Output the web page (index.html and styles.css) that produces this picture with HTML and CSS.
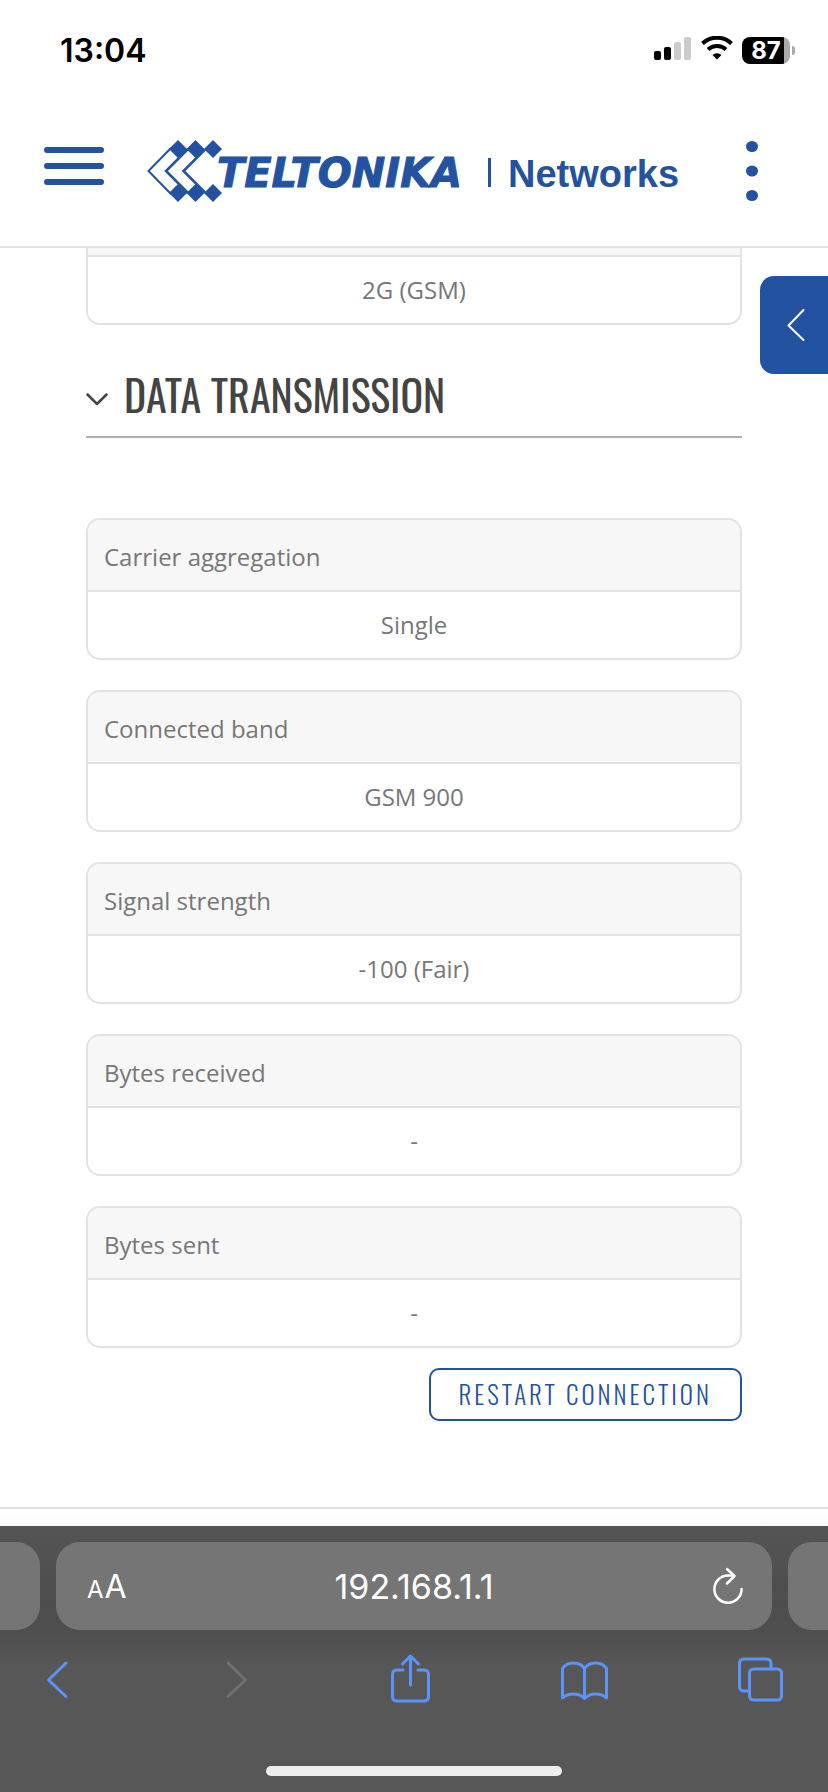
FILE: index.html
```html
<!DOCTYPE html>
<html lang="en">
<head>
    <meta charset="UTF-8">
    <meta name="viewport" content="width=device-width, initial-scale=1.0">
    <title>Teltonika Networks</title>
    <link rel="stylesheet" href="styles.css">
</head>
<body>
    <div class="status-bar">
        <span class="time">13:04</span>
        <div class="status-icons">
            <svg width="38" height="28" viewBox="0 0 38 28">
                <rect x="0" y="15" width="7" height="9" rx="2" fill="#000"/>
                <rect x="10" y="11" width="7" height="13" rx="2" fill="#000"/>
                <rect x="20" y="6" width="7" height="18" rx="2" fill="#ccc"/>
                <rect x="30" y="1" width="7" height="23" rx="2" fill="#ccc"/>
            </svg>
            <svg width="32" height="28" viewBox="0 0 32 28" fill="none" stroke="#000" stroke-width="4">
                <path d="M1.500 7.500a21 21 0 0 1 29 0"/>
                <path d="M7 13.500a13.200 13.200 0 0 1 18 0"/>
                <path d="M16 23.500l-4.500-4.500a6.500 6.500 0 0 1 9 0z" fill="#000" stroke="none"/>
            </svg>
            <div class="battery"><span>87</span></div>
        </div>
    </div>

    <header class="header">
        <button class="icon-button" aria-label="Menu">
            <svg width="60" height="60" viewBox="0 0 60 60" fill="#2352a0">
                <rect y="6" width="60" height="6" rx="3"/>
                <rect y="22" width="60" height="6" rx="3"/>
                <rect y="38" width="60" height="6" rx="3"/>
            </svg>
        </button>
        <a href="#" class="logo" aria-label="Teltonika Networks">
            <svg width="564" height="64" viewBox="0 0 564 64" fill="#2352a0">
                <g fill="none" stroke="#2352a0" stroke-width="2">
                    <path d="M28 9L5.500 32L28 55"/>
                    <path d="M45 10L23 32L45 54" stroke-width="2.500"/>
                    <path d="M62 10.500L40.500 32L62 53.500" stroke-width="2.500"/>
                </g>
                <path d="M35 1l9 9-9 9-9-9z"/>
                <path d="M52.500 1l9 9-9 9-9-9z"/>
                <path d="M70 1l9 9-9 9-9-9z"/>
                <path d="M35 45l9 9-9 9-9-9z"/>
                <path d="M52.500 45l9 9-9 9-9-9z"/>
                <path d="M70 45l9 9-9 9-9-9z"/>
                <text class="logo-name" x="74" y="48">TELTONIKA</text>
                <rect x="345" y="19" width="3" height="29"/>
                <text class="logo-unit" x="365" y="48">Networks</text>
            </svg>
        </a>
        <button class="icon-button" aria-label="More options">
            <svg width="12" height="60" viewBox="0 0 12 60" fill="#2352a0">
                <ellipse cx="6" cy="5.500" rx="6" ry="5.500"/>
                <ellipse cx="6" cy="30" rx="6" ry="5.500"/>
                <ellipse cx="6" cy="54.500" rx="6" ry="5.500"/>
            </svg>
        </button>
    </header>

    <main class="content">
        <button class="side-tab" aria-label="Open side panel">
            <svg width="18" height="32" viewBox="0 0 18 32" fill="none" stroke="#fff" stroke-width="2" stroke-linecap="round" stroke-linejoin="round">
                <path d="M16.500 1L1.500 16.500L16.500 31"/>
            </svg>
        </button>

        <!-- Card scrolled under the header -->
        <div class="card card-scrolled">
            <div class="card-label"></div>
            <div class="card-value">2G (GSM)</div>
        </div>

        <h2 class="section-title">
            <svg width="22" height="14" viewBox="0 0 22 14" fill="none" stroke="#444" stroke-width="2.500" stroke-linecap="round" stroke-linejoin="round">
                <path d="M1.500 1.500L11 11L20.500 1.500"/>
            </svg>
            <span>DATA TRANSMISSION</span>
        </h2>

        <div class="cards">
            <div class="card">
                <div class="card-label">Carrier aggregation</div>
                <div class="card-value">Single</div>
            </div>
            <div class="card">
                <div class="card-label">Connected band</div>
                <div class="card-value">GSM 900</div>
            </div>
            <div class="card">
                <div class="card-label">Signal strength</div>
                <div class="card-value">-100 (Fair)</div>
            </div>
            <div class="card">
                <div class="card-label">Bytes received</div>
                <div class="card-value">-</div>
            </div>
            <div class="card">
                <div class="card-label">Bytes sent</div>
                <div class="card-value">-</div>
            </div>
        </div>

        <div class="actions">
            <button class="button">RESTART CONNECTION</button>
        </div>
        <div class="footer"></div>
    </main>

    <div class="browser">
        <div class="tabs">
            <div class="tab-edge tab-left"></div>
            <div class="address">
                <button class="text-size" aria-label="Page settings"><span class="small-a">A</span><span class="big-a">A</span></button>
                <input class="url" type="text" value="192.168.1.1" aria-label="Address">
                <button class="icon-button reload" aria-label="Reload">
                    <svg width="32" height="38" viewBox="0 0 32 38" fill="none" stroke="#fff" stroke-width="2.500" stroke-linecap="round" stroke-linejoin="round">
                        <path d="M22 8.500H16A13.600 13.600 0 1 0 29.600 22"/>
                        <path d="M15 2l7.500 7L15 16.500"/>
                    </svg>
                </button>
            </div>
            <div class="tab-edge tab-right"></div>
        </div>
        <nav class="toolbar">
            <button class="icon-button" aria-label="Back">
                <svg width="52" height="52" viewBox="0 0 52 52"><path d="M35 10L17.500 27L35 43.500"/></svg>
            </button>
            <button class="icon-button disabled" aria-label="Forward" disabled>
                <svg width="52" height="52" viewBox="0 0 52 52"><path d="M21 10L38.500 27L21 43.500"/></svg>
            </button>
            <button class="icon-button" aria-label="Share">
                <svg width="52" height="52" viewBox="0 0 52 52">
                    <path d="M20 17h-6q-4.500 0-4.500 4.500v22q0 4.500 4.500 4.500h27q4.500 0 4.500-4.500v-22q0-4.500-4.500-4.500h-6"/>
                    <path d="M27.500 32V4M19.500 11l8-8 8 8"/>
                </svg>
            </button>
            <button class="icon-button" aria-label="Bookmarks">
                <svg width="52" height="52" viewBox="0 0 52 52">
                    <path d="M26.500 15.500C22 8 9 8 4.500 15.500V45C10 39.500 21 39.500 26.500 45.500C32 39.500 43 39.500 48.500 45V15.500C44 8 31 8 26.500 15.500V45"/>
                </svg>
            </button>
            <button class="icon-button" aria-label="Tabs">
                <svg width="52" height="52" viewBox="0 0 52 52">
                    <rect x="15.500" y="16" width="32" height="31" rx="4"/>
                    <path d="M15.500 38H10q-4.500 0-4.500-4.500V10.500Q5.500 6 10 6h22.500q4.500 0 4.500 4.500V16"/>
                </svg>
            </button>
        </nav>
        <div class="home-indicator"></div>
    </div>
</body>
</html>
```
FILE: styles.css
```css
* {
    box-sizing: border-box;
}
body {
    display: flex;
    flex-direction: column;
    min-height: 100vh;
    margin: 0;
    font-family: "Open Sans", sans-serif;
    font-size: 24px;
    color: #777;
    background-color: #fff;
}
button {
    padding: 0;
    border: none;
    background: none;
    cursor: pointer;
}
svg {
    display: block;
}
.icon-button {
    display: flex;
    flex: none;
}

/* Phone status bar */
.status-bar {
    display: flex;
    justify-content: space-between;
    align-items: center;
    height: 98px;
    padding: 2px 33px 0 60px;
    font-family: Inter, sans-serif;
    color: #000;
}
.time {
    font-size: 32px;
    font-weight: 600;
}
.status-icons {
    display: flex;
    align-items: center;
    gap: 9px;
}
.battery {
    position: relative;
    width: 48px;
    height: 27px;
    margin-right: 5px;
    border-radius: 8px;
    background: linear-gradient(to right, #000 42px, #aaa 42px);
    color: #fff;
    font-size: 24px;
    font-weight: 700;
    line-height: 27px;
    text-align: center;
}
.battery::after {
    content: "";
    position: absolute;
    top: 9px;
    right: -5px;
    width: 3px;
    height: 9px;
    border-radius: 0 4px 4px 0;
    background-color: #aaa;
}

/* Header */
.header {
    display: flex;
    justify-content: space-between;
    align-items: center;
    height: 150px;
    padding: 0 70px 2px 44px;
    border-bottom: 2px solid #e3e3e3;
}
.logo-name {
    font-family: "DejaVu Sans", sans-serif;
    font-size: 40px;
    font-weight: 700;
    font-style: italic;
    stroke: #2352a0;
    stroke-width: 1px;
}
.logo-unit {
    font-family: "Liberation Sans", Arial, sans-serif;
    font-size: 38px;
    font-weight: 700;
}

/* Page content */
.content {
    position: relative;
    flex: 1;
}
.side-tab {
    position: absolute;
    top: 28px;
    right: 0;
    display: flex;
    align-items: center;
    width: 68px;
    height: 98px;
    padding-left: 27px;
    border-radius: 14px 0 0 14px;
    background-color: #2352a0;
}
.section-title {
    display: flex;
    align-items: center;
    gap: 16px;
    height: 81px;
    margin: 32px 86px 80px;
    border-bottom: 2px solid #adadad;
    color: #444;
    font-family: Oswald, sans-serif;
    font-size: 42px;
    font-weight: 400;
    white-space: nowrap;
}
.section-title svg {
    margin-top: 6px;
}
.section-title span {
    padding-bottom: 6px;
}
.cards {
    display: flex;
    flex-direction: column;
    gap: 30px;
    margin: 0 86px;
}
.card {
    border: 2px solid #e3e3e3;
    border-radius: 14px;
    overflow: hidden;
}
.card-label {
    height: 72px;
    padding: 2px 16px 0;
    border-bottom: 2px solid #e3e3e3;
    background-color: #f7f7f7;
    line-height: 70px;
}
.card-value {
    height: 66px;
    line-height: 66px;
    text-align: center;
}
.card-scrolled {
    margin: 0 86px;
    border-top: none;
    border-radius: 0 0 14px 14px;
}
.card-scrolled .card-label {
    height: 9px;
}
.actions {
    display: flex;
    justify-content: flex-end;
    margin: 20px 86px 86px;
}
.button {
    height: 53px;
    padding: 0 28px 2px;
    border: 2px solid #2352a0;
    border-radius: 10px;
    color: #2352a0;
    font-family: Oswald, sans-serif;
    font-size: 25px;
    font-weight: 300;
    letter-spacing: 3px;
    white-space: nowrap;
}
.footer {
    height: 19px;
    border-top: 2px solid #e3e3e3;
    background: linear-gradient(#fff, #f9f9f9);
}

/* Browser bar */
.browser {
    height: 266px;
    padding-top: 16px;
    background: linear-gradient(#545454, #4d4d4d 80px, #4f4f4f 110px, #575757 140px);
}
.tabs {
    display: flex;
    gap: 16px;
    height: 88px;
}
.tab-edge {
    width: 40px;
    background-color: #757575;
}
.tab-left {
    border-radius: 0 24px 24px 0;
}
.tab-right {
    border-radius: 24px 0 0 24px;
}
.address {
    display: flex;
    flex: 1;
    align-items: center;
    justify-content: space-between;
    min-width: 0;
    padding: 0 28px 0 31px;
    border-radius: 24px;
    background-color: #757575;
}
.text-size {
    display: flex;
    align-items: baseline;
    gap: 1px;
    width: 40px;
    color: #fff;
    font-family: Inter, sans-serif;
}
.small-a {
    font-size: 24px;
}
.big-a {
    font-size: 32px;
}
.url {
    flex: 1;
    min-width: 0;
    padding: 0;
    border: none;
    outline: none;
    background: none;
    color: #fff;
    font-family: Inter, sans-serif;
    font-size: 34px;
    text-align: center;
}
.reload {
    margin-left: 11px;
}
.toolbar {
    display: flex;
    justify-content: space-between;
    margin-top: 23px;
    padding: 0 42px 0 31px;
}
.toolbar svg {
    fill: none;
    stroke: #5a94fb;
    stroke-width: 3;
    stroke-linecap: round;
    stroke-linejoin: round;
}
.toolbar .disabled svg {
    stroke: #707070;
}
.home-indicator {
    width: 296px;
    height: 10px;
    margin: 61px auto 0;
    border-radius: 5px;
    background-color: #eee;
}
```
